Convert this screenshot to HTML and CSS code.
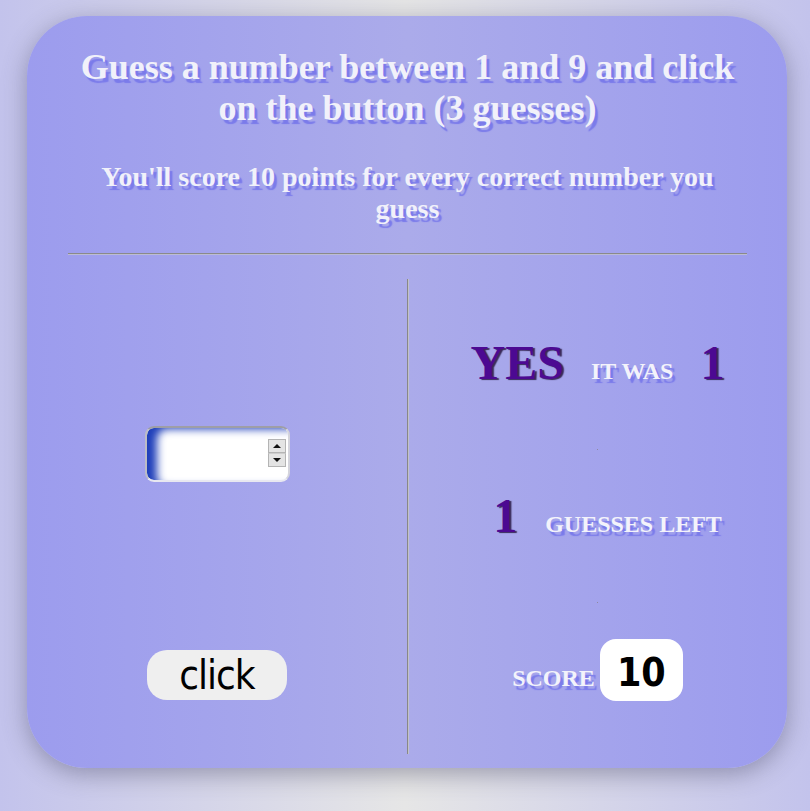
FILE: index.html
```html
<!DOCTYPE html>
<html lang="en">
<head>
<meta charset="utf-8">
<title>Guess a number</title>
<link rel="stylesheet" href="styles.css">
</head>
<body>
<main class="card">
  <header class="intro">
    <h1 class="title">Guess a number between 1 and 9 and click on the button (3 guesses)</h1>
    <h2 class="subtitle">You'll score 10 points for every correct number you guess</h2>
    <hr class="rule">
  </header>
  <section class="play">
    <div class="col col-left">
      <span class="field">
        <input class="guess" type="number" min="1" max="9">
        <span class="spin" aria-hidden="true">
          <span class="spin-btn spin-up"></span>
          <span class="spin-btn spin-down"></span>
        </span>
      </span>
      <button class="btn" type="button">click</button>
    </div>
    <div class="col col-right">
      <div class="row row-result">
        <span class="big">YES</span>
        <span class="label">IT WAS</span>
        <span class="big">1</span>
      </div>
      <span class="dot dot-a"></span>
      <div class="row row-left">
        <span class="big">1</span>
        <span class="label">GUESSES LEFT</span>
      </div>
      <span class="dot dot-b"></span>
      <div class="row row-score">
        <span class="label">SCORE</span>
        <span class="score">10</span>
      </div>
    </div>
  </section>
</main>
</body>
</html>
```

FILE: styles.css
```css
html, body {
  margin: 0;
  height: 100%;
}

body {
  background: linear-gradient(to right, #c3c3ec 0%, #e6e6e6 50%, #c3c3ec 100%);
  padding: 16px 0 0 27px;
  box-sizing: border-box;
  overflow: hidden;
}

.card {
  width: 760px;
  height: 752px;
  box-sizing: border-box;
  border-radius: 60px;
  background: linear-gradient(to right, #9c9cee 0%, #ababea 50%, #9c9cee 100%);
  box-shadow: 0 6px 24px rgba(70, 70, 100, 0.45);
  padding-top: 31px;
}

.intro {
  padding: 0 40px 0 41px;
}

.title,
.subtitle {
  margin: 0;
  text-align: center;
  font-family: "Liberation Serif", "Times New Roman", serif;
  font-weight: bold;
  color: #f1f1fa;
  text-shadow: 3px 4px 1px #7b7bea;
}

.title {
  font-size: 36px;
  line-height: 41px;
  padding: 0 10px;
}

.subtitle {
  font-size: 28px;
  line-height: 32px;
  margin-top: 32px;
  padding: 0 20px;
}

.rule {
  margin: 28px 0 0;
  border: 0;
  border-top: 1px solid #8a8a8a;
  border-bottom: 1px solid #bcbcd4;
  height: 0;
}

.play {
  display: grid;
  grid-template-columns: 380px 380px;
  margin-top: 24px;
  height: 475px;
}

.col {
  display: flex;
  flex-direction: column;
  align-items: center;
}

.col-left {
  padding-top: 147px;
}

.field {
  position: relative;
  display: block;
  width: 145px;
  height: 56px;
}

.guess {
  display: block;
  width: 145px;
  height: 56px;
  box-sizing: border-box;
  border: 2px solid;
  border-color: #9e9ea6 #d4d4dc #e8e8f0 #bcbcc6;
  border-radius: 9px;
  background: #fff;
  box-shadow: inset 13px 4px 9px -3px #1f3fba;
  padding: 0 26px 0 16px;
  font-family: "DejaVu Sans", sans-serif;
  font-size: 20px;
  outline: none;
  -moz-appearance: textfield;
}

.guess::-webkit-inner-spin-button,
.guess::-webkit-outer-spin-button {
  -webkit-appearance: none;
  margin: 0;
}

.spin {
  position: absolute;
  top: 13px;
  right: 4px;
  width: 18px;
  display: flex;
  flex-direction: column;
}

.spin-btn {
  position: relative;
  height: 14px;
  box-sizing: border-box;
  border: 1px solid #b4b4b4;
  background: #e4e4e4;
}

.spin-down {
  border-top-color: #cdcdcd;
}

.spin-btn::after {
  content: "";
  position: absolute;
  left: 4px;
  width: 0;
  height: 0;
  border-left: 4px solid transparent;
  border-right: 4px solid transparent;
}

.spin-up::after {
  top: 4px;
  border-bottom: 4px solid #111;
}

.spin-down::after {
  top: 4px;
  border-top: 4px solid #111;
}

.btn {
  margin-top: 168px;
  width: 140px;
  height: 50px;
  border: 0;
  border-radius: 20px;
  background: #efefef;
  color: #000;
  font-family: "DejaVu Sans Condensed", "DejaVu Sans", sans-serif;
  font-size: 40px;
  letter-spacing: -1px;
  line-height: 50px;
  padding: 0 0 2px;
}

.col-right {
  border-left: 1px solid #888888;
  box-shadow: inset 1px 0 0 #c2c2c8;
  box-sizing: border-box;
}

.row {
  display: flex;
  align-items: baseline;
  font-family: "Liberation Serif", "Times New Roman", serif;
  font-weight: bold;
}

.row-result {
  margin-top: 56px;
  gap: 27px;
}

.row-left {
  margin-top: 38px;
  gap: 28px;
  padding-left: 20px;
}

.row-score {
  margin-top: 36px;
  gap: 5px;
}

.big {
  font-size: 48px;
  color: #4c0992;
  text-shadow: 2px 1px 1px rgba(20, 0, 40, 0.75);
}

.label {
  font-size: 24px;
  color: #f3f3fb;
  text-shadow: 3px 4px 1px #7b7bea;
}

.dot {
  display: block;
  width: 1px;
  height: 1px;
  background: #8f8aa0;
}

.dot-a {
  margin-top: 59px;
}

.dot-b {
  margin-top: 59px;
}

.score {
  display: inline-block;
  background: #fff;
  border-radius: 16px;
  width: 83px;
  height: 62px;
  box-sizing: border-box;
  text-align: center;
  padding-top: 6px;
  line-height: 56px;
  font-family: "DejaVu Sans Condensed", "DejaVu Sans", sans-serif;
  font-weight: bold;
  font-size: 39px;
  color: #000;
}
```
